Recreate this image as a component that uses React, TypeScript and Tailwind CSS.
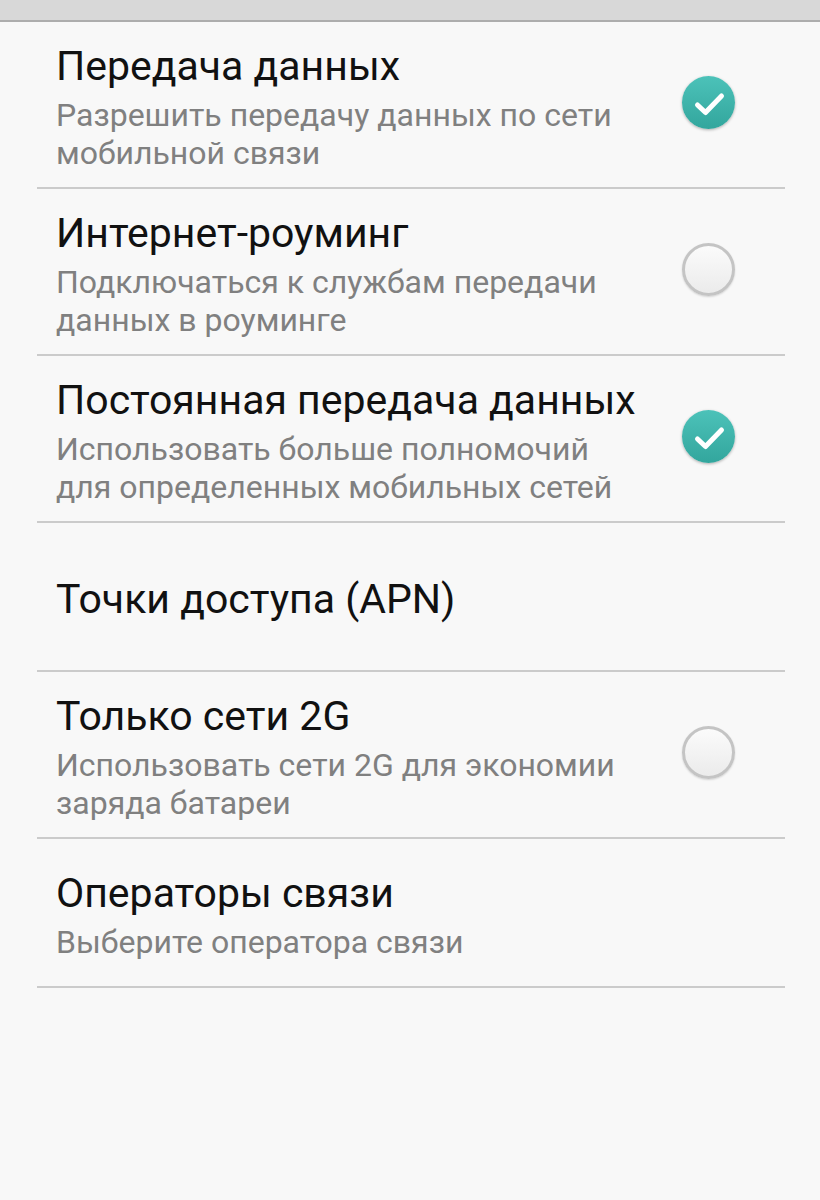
import React from 'react';

type Item = {
  title: string;
  summary?: string[];
  checked?: boolean;
};

const items: Item[] = [
  { title: 'Передача данных', summary: ['Разрешить передачу данных по сети', 'мобильной связи'], checked: true },
  { title: 'Интернет-роуминг', summary: ['Подключаться к службам передачи', 'данных в роуминге'], checked: false },
  { title: 'Постоянная передача данных', summary: ['Использовать больше полномочий', 'для определенных мобильных сетей'], checked: true },
  { title: 'Точки доступа (APN)' },
  { title: 'Только сети 2G', summary: ['Использовать сети 2G для экономии', 'заряда батареи'], checked: false },
  { title: 'Операторы связи', summary: ['Выберите оператора связи'] },
];

function CheckCircle({ checked }: { checked: boolean }) {
  if (checked) {
    return (
      <div className="mb-[9px] flex h-[53px] w-[53px] items-center justify-center rounded-full bg-gradient-to-b from-[#4cc2b9] to-[#32a69d] shadow-[0_1px_3px_rgba(0,0,0,0.3)]">
        <svg viewBox="0 0 52 52" className="h-[52px] w-[52px]" fill="none">
          <path d="M14.5 28l8 7.5L38.5 19" stroke="white" strokeWidth="5" strokeLinecap="round" strokeLinejoin="round" />
        </svg>
      </div>
    );
  }
  return (
    <div className="mb-[9px] h-[53px] w-[53px] rounded-full border-[3px] border-[#c4c4c4] bg-gradient-to-b from-[#fbfbfb] to-[#ebebeb] shadow-[0_1px_2px_rgba(0,0,0,0.15)]" />
  );
}

export default function App() {
  return (
    <div className="min-h-[1200px] bg-[#f8f8f8]" style={{ fontFamily: 'Roboto, "Noto Sans", sans-serif' }}>
      <div className="h-[20px] bg-[#d8d8d8]" />
      <div className="h-[2px] bg-[#adadad]" />

      <div className="ml-[37px] mr-[35px]">
        {items.map((item) => (
          <div
            key={item.title}
            className="flex min-h-[149px] items-center border-b-2 border-[#cbcbcb] pt-[20px] pb-[15px] pl-[19px] pr-[50px]"
          >
            <div className="flex-1 whitespace-nowrap">
              <div className="text-[41px] leading-[48px] text-[#111111]">{item.title}</div>
              {item.summary && (
                <div className="mt-[6px] text-[32px] leading-[38px] text-[#808080]">
                  {item.summary.map((line) => (
                    <div key={line}>{line}</div>
                  ))}
                </div>
              )}
            </div>
            {item.checked !== undefined && <CheckCircle checked={item.checked} />}
          </div>
        ))}
      </div>
    </div>
  );
}
